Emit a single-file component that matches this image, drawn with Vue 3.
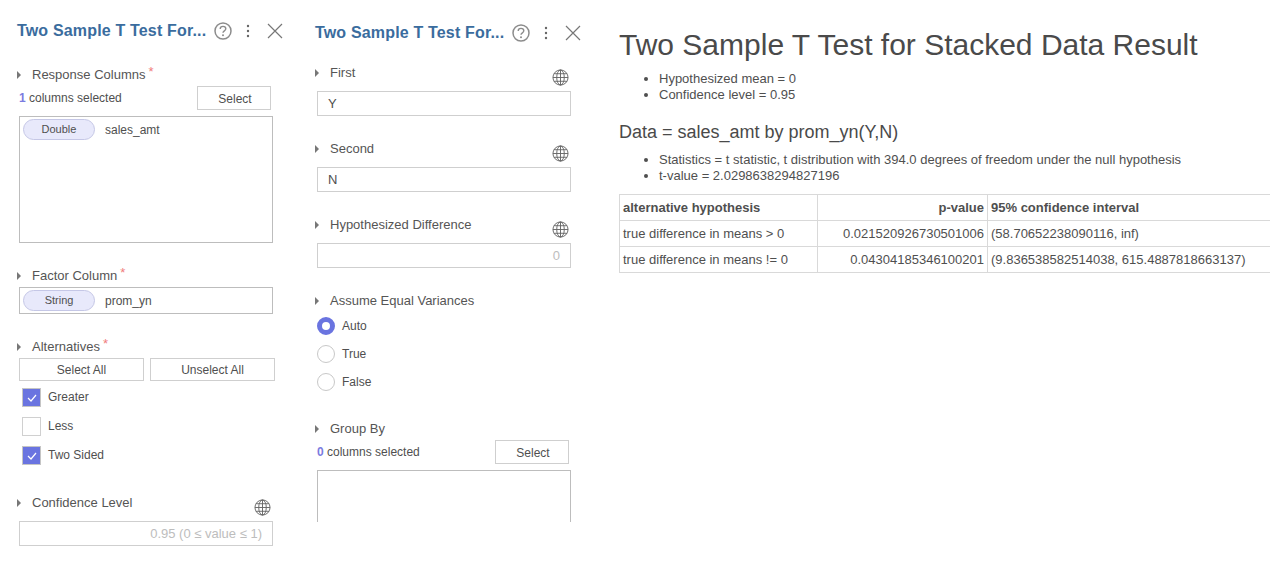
<script setup>
const resultRows = [
  { alt: 'true difference in means > 0', p: '0.021520926730501006', ci: '(58.70652238090116, inf)' },
  { alt: 'true difference in means != 0', p: '0.04304185346100201', ci: '(9.836538582514038, 615.4887818663137)' }
]
</script>

<template>
  <div class="page">
    <div class="panel panel-one">
      <div class="panel-header">
        <span class="panel-title">Two Sample T Test For...</span>
        <svg class="help" width="18" height="18" viewBox="0 0 18 18"><circle cx="9" cy="9" r="8" fill="none" stroke="#8c8c8c" stroke-width="1.5"/><path d="M6.2 7c0-1.6 1.2-2.6 2.8-2.6s2.8 1 2.8 2.4c0 2-2.8 2-2.8 3.9" fill="none" stroke="#8c8c8c" stroke-width="1.4"/><circle cx="9" cy="13.2" r="1" fill="#8c8c8c"/></svg>
        <svg class="dots" width="4" height="14" viewBox="0 0 4 14"><circle cx="2" cy="2" r="1.2" fill="#666"/><circle cx="2" cy="7" r="1.2" fill="#666"/><circle cx="2" cy="12" r="1.2" fill="#666"/></svg>
        <svg class="close" width="16" height="16" viewBox="0 0 16 16"><path d="M1 1l14 14M15 1L1 15" stroke="#777" stroke-width="1.2" fill="none"/></svg>
      </div>

      <div class="field first-field">
        <div class="label-row"><span class="arrow"></span><span class="label">Response Columns</span><span class="req">*</span></div>
        <div class="select-row">
          <span class="count"><b>1</b> columns selected</span>
          <button class="btn select-btn">Select</button>
        </div>
        <div class="list-box tall">
          <span class="pill">Double</span><span class="col-name">sales_amt</span>
        </div>
      </div>

      <div class="field factor-field">
        <div class="label-row"><span class="arrow"></span><span class="label">Factor Column</span><span class="req">*</span></div>
        <div class="list-box single">
          <span class="pill">String</span><span class="col-name">prom_yn</span>
        </div>
      </div>

      <div class="field alt-field">
        <div class="label-row"><span class="arrow"></span><span class="label">Alternatives</span><span class="req">*</span></div>
        <div class="btn-row">
          <button class="btn all-btn">Select All</button>
          <button class="btn all-btn">Unselect All</button>
        </div>
        <div class="check-row"><span class="check on"><svg width="12" height="10" viewBox="0 0 12 10"><path d="M2 5l3 3 5-6" fill="none" stroke="#fff" stroke-width="1.2"/></svg></span>Greater</div>
        <div class="check-row"><span class="check"></span>Less</div>
        <div class="check-row"><span class="check on"><svg width="12" height="10" viewBox="0 0 12 10"><path d="M2 5l3 3 5-6" fill="none" stroke="#fff" stroke-width="1.2"/></svg></span>Two Sided</div>
      </div>

      <div class="field conf-field">
        <div class="label-row">
          <span class="arrow"></span><span class="label">Confidence Level</span>
          <svg class="globe" width="17" height="17" viewBox="0 0 18 18"><g fill="none" stroke="#666" stroke-width="1"><circle cx="9" cy="9" r="8"/><ellipse cx="9" cy="9" rx="4" ry="8"/><path d="M9 1v16M1 9h16M2 5h14M2 13h14"/></g></svg>
        </div>
        <div class="text-input placeholder">0.95 (0 ≤ value ≤ 1)</div>
      </div>
    </div>

    <div class="panel panel-two">
      <div class="panel-header">
        <span class="panel-title">Two Sample T Test For...</span>
        <svg class="help" width="18" height="18" viewBox="0 0 18 18"><circle cx="9" cy="9" r="8" fill="none" stroke="#8c8c8c" stroke-width="1.5"/><path d="M6.2 7c0-1.6 1.2-2.6 2.8-2.6s2.8 1 2.8 2.4c0 2-2.8 2-2.8 3.9" fill="none" stroke="#8c8c8c" stroke-width="1.4"/><circle cx="9" cy="13.2" r="1" fill="#8c8c8c"/></svg>
        <svg class="dots" width="4" height="14" viewBox="0 0 4 14"><circle cx="2" cy="2" r="1.2" fill="#666"/><circle cx="2" cy="7" r="1.2" fill="#666"/><circle cx="2" cy="12" r="1.2" fill="#666"/></svg>
        <svg class="close" width="16" height="16" viewBox="0 0 16 16"><path d="M1 1l14 14M15 1L1 15" stroke="#777" stroke-width="1.2" fill="none"/></svg>
      </div>

      <div class="field two-first">
        <div class="label-row">
          <span class="arrow"></span><span class="label">First</span>
          <svg class="globe" width="17" height="17" viewBox="0 0 18 18"><g fill="none" stroke="#666" stroke-width="1"><circle cx="9" cy="9" r="8"/><ellipse cx="9" cy="9" rx="4" ry="8"/><path d="M9 1v16M1 9h16M2 5h14M2 13h14"/></g></svg>
        </div>
        <div class="text-input left">Y</div>
      </div>

      <div class="field two-next">
        <div class="label-row">
          <span class="arrow"></span><span class="label">Second</span>
          <svg class="globe" width="17" height="17" viewBox="0 0 18 18"><g fill="none" stroke="#666" stroke-width="1"><circle cx="9" cy="9" r="8"/><ellipse cx="9" cy="9" rx="4" ry="8"/><path d="M9 1v16M1 9h16M2 5h14M2 13h14"/></g></svg>
        </div>
        <div class="text-input left">N</div>
      </div>

      <div class="field two-next">
        <div class="label-row">
          <span class="arrow"></span><span class="label">Hypothesized Difference</span>
          <svg class="globe" width="17" height="17" viewBox="0 0 18 18"><g fill="none" stroke="#666" stroke-width="1"><circle cx="9" cy="9" r="8"/><ellipse cx="9" cy="9" rx="4" ry="8"/><path d="M9 1v16M1 9h16M2 5h14M2 13h14"/></g></svg>
        </div>
        <div class="text-input placeholder">0</div>
      </div>

      <div class="field two-next">
        <div class="label-row"><span class="arrow"></span><span class="label">Assume Equal Variances</span></div>
        <div class="radio-row first-radio"><span class="radio on"></span>Auto</div>
        <div class="radio-row"><span class="radio"></span>True</div>
        <div class="radio-row"><span class="radio"></span>False</div>
      </div>

      <div class="field group-field">
        <div class="label-row"><span class="arrow"></span><span class="label">Group By</span></div>
        <div class="select-row">
          <span class="count"><b>0</b> columns selected</span>
          <button class="btn select-btn">Select</button>
        </div>
        <div class="list-box tall"></div>
      </div>
    </div>

    <div class="result">
      <h1>Two Sample T Test for Stacked Data Result</h1>
      <ul>
        <li>Hypothesized mean = 0</li>
        <li>Confidence level = 0.95</li>
      </ul>
      <h3>Data = sales_amt by prom_yn(Y,N)</h3>
      <ul class="stats">
        <li>Statistics = t statistic, t distribution with 394.0 degrees of freedom under the null hypothesis</li>
        <li>t-value = 2.0298638294827196</li>
      </ul>
      <table>
        <thead>
          <tr>
            <th class="c-alt">alternative hypothesis</th>
            <th class="c-p">p-value</th>
            <th class="c-ci">95% confidence interval</th>
          </tr>
        </thead>
        <tbody>
          <tr v-for="row in resultRows" :key="row.alt">
            <td>{{ row.alt }}</td>
            <td class="c-p">{{ row.p }}</td>
            <td>{{ row.ci }}</td>
          </tr>
        </tbody>
      </table>
    </div>
  </div>
</template>

<style>
html, body {
  margin: 0;
  background: #fff;
}
</style>

<style scoped>
.page {
  display: flex;
  width: 1270px;
  height: 564px;
  overflow: hidden;
  font-family: "Liberation Sans", Arial, sans-serif;
  font-size: 12px;
  color: #4f4f4f;
}

.panel {
  flex: none;
  box-sizing: border-box;
  width: 298px;
  padding-left: 19px;
  overflow: hidden;
}

.panel-two {
  width: 306px;
  height: 522px;
}

.panel-one .panel-header {
  padding-top: 22px;
}

.panel-two .panel-header {
  padding-top: 24px;
}

.panel-header {
  display: flex;
  align-items: center;
  height: 18px;
  margin-left: -2px;
}

.panel-title {
  width: 197px;
  font-size: 16px;
  font-weight: 700;
  letter-spacing: 0.17px;
  line-height: 18px;
  color: #3a6c9e;
  white-space: nowrap;
}

.help {
  flex: none;
}

.dots {
  flex: none;
  margin-left: 14px;
}

.close {
  flex: none;
  margin-left: 17px;
}

.field {
  width: 254px;
}

.first-field {
  margin-top: 25px;
}

.factor-field,
.alt-field,
.two-next {
  margin-top: 23px;
}

.conf-field,
.group-field {
  margin-top: 28px;
}

.two-first {
  margin-top: 21px;
}

.label-row {
  display: flex;
  align-items: center;
  height: 18px;
  margin-left: -2px;
  position: relative;
}

.arrow {
  flex: none;
  width: 0;
  height: 0;
  border-top: 4px solid transparent;
  border-bottom: 4px solid transparent;
  border-left: 4px solid #777;
  margin-right: 11px;
  margin-top: 2px;
}

.label {
  font-size: 13px;
  line-height: 18px;
  margin-top: 2px;
  color: #555;
}

.req {
  color: #f07c7c;
  font-size: 13px;
  line-height: 13px;
  margin-left: 3px;
  align-self: flex-start;
}

.globe {
  position: absolute;
  right: 2px;
  top: 6px;
}

.select-row {
  display: flex;
  align-items: center;
  justify-content: space-between;
  height: 24px;
  margin-top: 3px;
  padding-right: 2px;
}

.count b {
  color: #7b7be0;
  font-weight: 700;
}

.btn {
  box-sizing: border-box;
  background: #fff;
  border: 1px solid #cfcfcf;
  font-family: inherit;
  font-size: 12px;
  color: #4f4f4f;
  padding: 0;
}

.select-btn {
  width: 74px;
  height: 24px;
  padding: 1px 0 0 2px;
}

.list-box {
  box-sizing: border-box;
  border: 1px solid #bdbdbd;
  padding: 2px 3px;
  display: flex;
  align-items: flex-start;
  margin-top: 6px;
}

.tall {
  height: 127px;
}

.single {
  height: 27px;
}

.factor-field .list-box {
  margin-top: 3px;
}

.pill {
  box-sizing: border-box;
  flex: none;
  width: 72px;
  height: 21px;
  line-height: 18px;
  text-align: center;
  background: #e8e9fb;
  border: 1px solid #c5c7e6;
  border-radius: 11px;
  font-size: 11px;
  color: #4f4f4f;
}

.col-name {
  line-height: 23px;
  margin-left: 10px;
}

.btn-row {
  display: flex;
  gap: 6px;
  margin-top: 3px;
}

.all-btn {
  width: 125px;
  height: 23px;
  flex: none;
}

.check-row {
  display: flex;
  align-items: flex-start;
  height: 19px;
  line-height: 18px;
  margin-top: 10px;
  padding-left: 3px;
}

.btn-row + .check-row {
  margin-top: 7px;
}

.check {
  box-sizing: border-box;
  flex: none;
  display: flex;
  align-items: center;
  justify-content: center;
  width: 19px;
  height: 19px;
  margin-right: 7px;
  border: 1px solid #d0d0d0;
  background: #fff;
}

.check.on {
  background: #6a74e0;
  border-color: #c5c5c5;
}

.text-input {
  box-sizing: border-box;
  height: 25px;
  margin-top: 10px;
  border: 1px solid #cfcfcf;
  line-height: 23px;
  padding: 0 10px;
  text-align: right;
}

.text-input.left {
  text-align: left;
  font-size: 13px;
}

.text-input.placeholder {
  color: #bdbdbd;
  font-size: 13px;
}

.radio-row {
  display: flex;
  align-items: center;
  height: 18px;
  margin-top: 10px;
}

.radio-row.first-radio {
  margin-top: 8px;
}

.radio {
  box-sizing: border-box;
  flex: none;
  width: 18px;
  height: 18px;
  margin-right: 7px;
  border: 1px solid #c8c8c8;
  border-radius: 50%;
  background: #fff;
}

.radio.on {
  border: 5px solid #6a74e0;
}

.result {
  flex: none;
  width: 651px;
  margin-left: 15px;
  overflow: hidden;
}

h1 {
  margin: 27px 0 0;
  font-size: 30px;
  font-weight: 400;
  line-height: 36px;
  color: #4a4a4a;
}

ul {
  margin: 8px 0 0;
  padding-left: 40px;
  font-size: 13px;
}

ul.stats {
  margin-top: 10px;
}

li {
  line-height: 16px;
}

h3 {
  margin: 19px 0 0;
  font-size: 18px;
  font-weight: 400;
  line-height: 20px;
  color: #4a4a4a;
}

table {
  border-collapse: collapse;
  table-layout: fixed;
  width: 660px;
  margin-top: 10px;
}

th, td {
  box-sizing: border-box;
  height: 26px;
  padding: 0 3px;
  border: 1px solid #d9d9d9;
  text-align: left;
  font-size: 13px;
  white-space: nowrap;
}

th {
  font-weight: 700;
}

.c-alt {
  width: 198px;
}

.c-p {
  width: 170px;
  text-align: right;
}
</style>
